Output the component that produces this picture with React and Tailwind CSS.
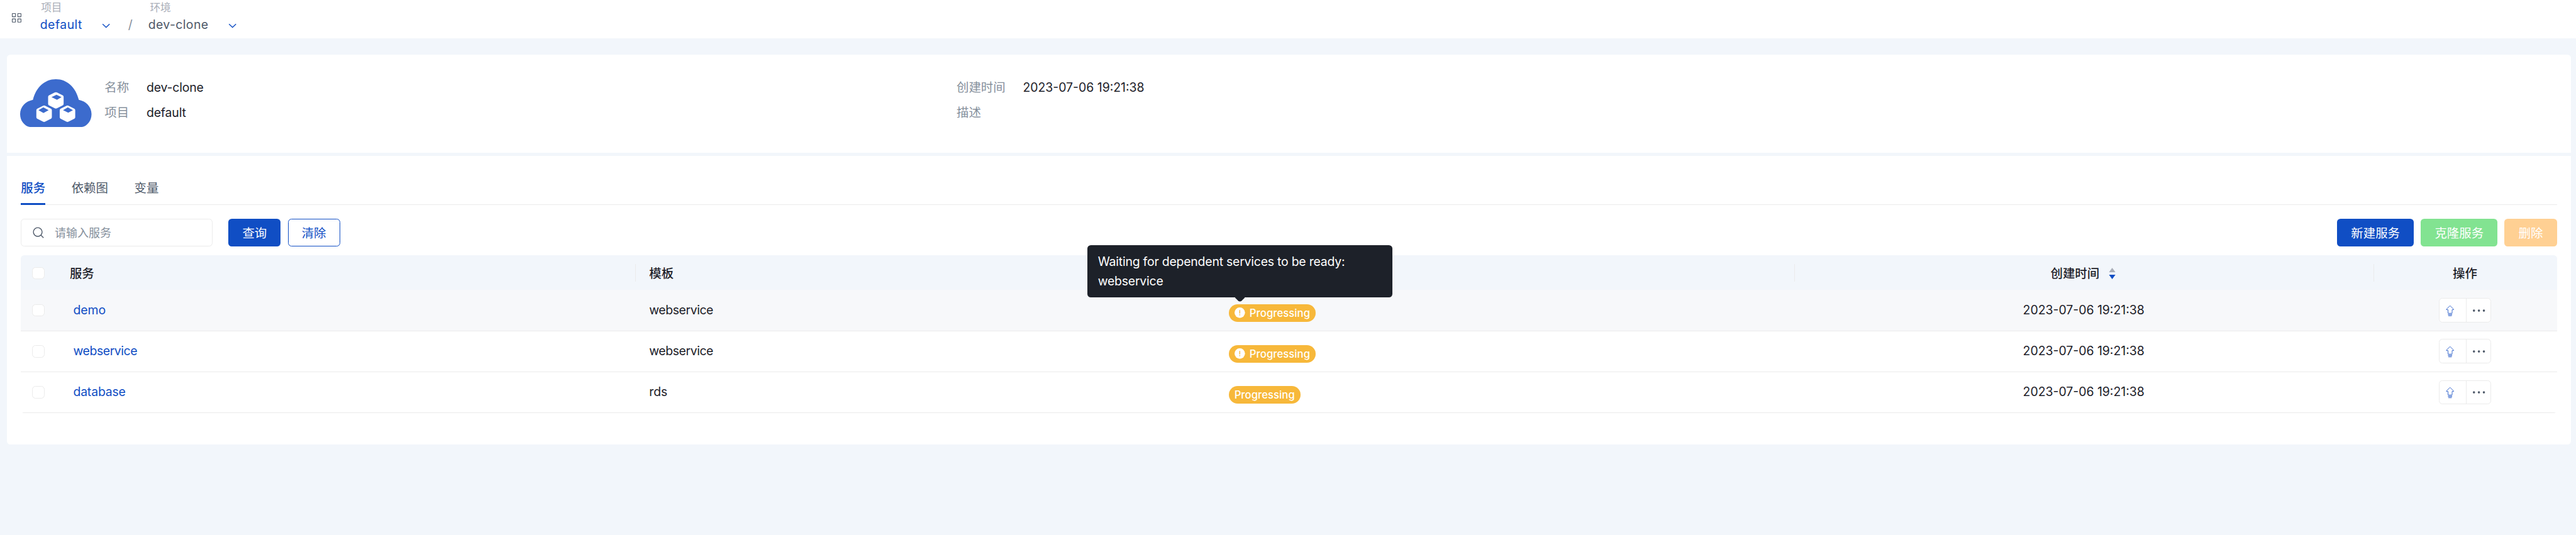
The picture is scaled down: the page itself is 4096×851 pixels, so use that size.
import React from "react";

const CheckBox = () => (
  <span className="block size-3.5 rounded-[4px] border border-[#ebebeb] bg-white" />
);

const Chevron = () => (
  <svg className="size-3.5 text-[#104ec4]" viewBox="0 0 14 14" fill="none" stroke="currentColor" strokeWidth="1">
    <path d="M3 5.200l4 3.900 4-3.900" />
  </svg>
);

const Cube = ({ x, y, children }) => (
  <g transform={`translate(${x} ${y})`}>
    <path
      d="M-8.900 -4 Q-8.900 -5.100 -8 -5.600 L-1.200 -9 Q0 -9.600 1.200 -9 L8 -5.600 Q8.900 -5.100 8.900 -4 V4.200 Q8.900 5.300 8 5.800 L1.200 9.200 Q0 9.800 -1.200 9.200 L-8 5.800 Q-8.900 5.300 -8.900 4.200 Z"
      fill="#fff"
    />
    {children}
  </g>
);

const Cloud = () => (
  <svg className="h-[55px] w-[82px] shrink-0" viewBox="0 0 82 55">
    <path
      d="M14.700 23.600 C18.200 9.500 28 0 41 0 C54 0 63.800 9.500 67.300 23.600 C75.500 25.200 81.900 31.500 81.900 40 C81.900 48.300 76 55 69 55 H13.200 C6 55 0 48.300 0 40 C0 31.500 6.400 25.200 14.700 23.600 Z"
      fill="#3c6bcd"
    />
    <Cube x={41} y={24.2}>
      <path d="M-5 -3.600 L0.700 -6.400 L6.500 -3.700 L1.300 -0.600 Z" fill="#3c6bcd" />
    </Cube>
    <Cube x={27.5} y={39.5}>
      <path d="M-6.500 -3.900 L-0.900 -7.300 L5.200 -3.900 L-0.700 -0.700 Z" fill="#3c6bcd" />
    </Cube>
    <Cube x={54.3} y={39.5}>
      <path d="M-5.100 -3.900 L0.400 -7.200 L6.300 -3.900 L0.900 -1.100 Z" fill="#3c6bcd" />
    </Cube>
  </svg>
);

const Actions = () => (
  <div className="flex h-7 w-[60px] overflow-hidden rounded-[4px] border border-[#ebebeb] bg-white">
    <div className="flex w-[31px] items-center border-r border-[#ebebeb] pl-[5.3px]">
      <svg className="size-3.5 text-[#3c6bcd]" viewBox="0 0 14 14" fill="none" stroke="currentColor" strokeWidth="0.7" strokeLinejoin="round">
        <path d="M7 1.700 L11.200 5.700 V6.200 H9.400 V10.300 H4.700 V6.200 H2.800 V5.700 Z M4.700 11.600 H9.400 M4.700 12.200 H9.400 M5.100 13.500 H8.900" />
      </svg>
    </div>
    <div className="flex flex-1 items-center justify-center">
      <svg className="size-4 text-[#4e5969]" viewBox="0 0 16 16" fill="currentColor">
        <circle cx="2.7" cy="8" r="1.3" />
        <circle cx="8.4" cy="8" r="1.3" />
        <circle cx="14.1" cy="8" r="1.3" />
      </svg>
    </div>
  </div>
);

const Badge = ({ icon, children }) => (
  <span className="mt-1.5 inline-flex h-5 items-center rounded-full bg-[#f7b83a] px-[6.5px] text-xs font-medium tracking-[0.05px] text-white">
    {icon && (
      <svg className="mb-px ml-[0.5px] mr-[5px] size-3" viewBox="0 0 12 12">
        <circle cx="6" cy="6" r="6" fill="#fff" />
        <path d="M6 3v4M6 8v1" stroke="#f7b83a" strokeWidth="1" />
      </svg>
    )}
    {children}
  </span>
);

const Field = ({ label, labelWidth, children }) => (
  <div className="flex h-[29px] items-center">
    <span className={`${labelWidth} text-[#86909c]`}>{label}</span>
    <span className="text-[#1d2129]">{children}</span>
  </div>
);

const Sep = () => <i className="absolute left-0 top-2.5 h-5 w-px bg-[#ebebeb]" />;

const rows = [
  { name: "demo", template: "webservice", icon: true, hover: true, tracking: "tracking-normal", templateTracking: "tracking-[-0.3px]" },
  { name: "webservice", template: "webservice", icon: true, tracking: "tracking-[-0.3px]", templateTracking: "tracking-[-0.3px]" },
  { name: "database", template: "rds", tracking: "tracking-[-0.12px]", templateTracking: "tracking-normal" },
];

const cols = "grid grid-cols-[40px_664.5px_664.5px_664.5px_664px_1fr]";

export default function App() {
  return (
    <div className="h-[851px] w-[4096px] overflow-hidden bg-[#f2f6fb]">
      <div
        className="w-[2954px] text-sm font-normal text-[#1d2129] [zoom:1.38659]"
        style={{ fontFamily: 'Inter, "Noto Sans CJK SC", sans-serif' }}
      >
        <header className="flex h-11 bg-white pl-[13px]">
          <svg className="mt-[14.5px] size-3" viewBox="0 0 12 12" fill="none" stroke="#4e5969" strokeWidth="0.8">
            <rect x="1.1" y="1.1" width="3.7" height="3.7" rx="0.3" />
            <rect x="7.4" y="1.1" width="3.7" height="3.7" rx="0.3" />
            <rect x="1.1" y="7.3" width="3.7" height="3.7" rx="0.3" />
            <rect x="7.4" y="7.3" width="3.7" height="3.7" rx="0.3" />
          </svg>
          <div className="ml-[21px] w-[101px]">
            <div className="pl-[1px] pt-[0.5px] text-xs text-[#a9aeb8]">项目</div>
            <div className="flex h-[25px] items-center tracking-[0.35px] text-[#104ec4]">
              <span className="w-[69px]">default</span>
              <Chevron />
            </div>
          </div>
          <div className="mt-4 flex h-[26px] w-[23px] items-center text-[#86909c]">/</div>
          <div>
            <div className="pl-[2px] pt-[0.5px] text-xs text-[#a9aeb8]">环境</div>
            <div className="flex h-[25px] items-center tracking-[0.3px] text-[#4e5969]">
              <span className="w-[90px]">dev-clone</span>
              <Chevron />
            </div>
          </div>
        </header>

        <main className="pl-2 pr-1.5 pt-[19px]">
          <section className="flex h-28 rounded-t-[4px] bg-white pl-[15px] pt-[23.5px]">
            <div className="pt-[4.5px]">
              <Cloud />
            </div>
            <div className="ml-[15px] w-[977px] tracking-[-0.1px]">
              <Field label="名称" labelWidth="w-[48px]">dev-clone</Field>
              <Field label="项目" labelWidth="w-[48px]">default</Field>
            </div>
            <div>
              <Field label="创建时间" labelWidth="w-[76px]">2023-07-06 19:21:38</Field>
              <Field label="描述" labelWidth="w-[76px]" />
            </div>
          </section>

          <section className="mt-1 h-[331px] rounded-b-[4px] bg-white px-4 pt-4">
            <nav className="flex h-10 gap-[30px] border-b border-[#ebebeb] text-[#4e5969]">
              <div className="relative flex h-10 items-center pt-0.5 font-medium text-[#104ec4]">
                服务
                <i className="absolute inset-x-0 bottom-0 h-0.5 bg-[#104ec4]" />
              </div>
              <div className="flex h-10 items-center pt-0.5">依赖图</div>
              <div className="flex h-10 items-center pt-0.5">变量</div>
            </nav>

            <div className="mt-4 flex h-8 justify-between">
              <div className="flex">
                <div className="flex w-[220px] items-center rounded-[4px] border border-[#ebebeb] pl-[13px] pt-px text-[13px] text-[#86909c]">
                  <svg className="mb-px mr-3 size-[13px]" viewBox="0 0 13 13" fill="none" stroke="#4e5969" strokeWidth="1">
                    <circle cx="5.8" cy="5.8" r="5" />
                    <path d="M9.400 9.400 L12.400 12.400" />
                  </svg>
                  请输入服务
                </div>
                <button className="ml-[18px] w-[60px] rounded-[4px] bg-[#104ec4] pt-0.5 text-white">查询</button>
                <button className="ml-2 w-[60px] rounded-[4px] border border-[#104ec4] pt-0.5 text-[#104ec4]">清除</button>
              </div>
              <div className="flex gap-2 text-white">
                <button className="w-[88px] rounded-[4px] bg-[#104ec4] pt-0.5">新建服务</button>
                <button className="w-[88px] rounded-[4px] bg-[#82e391] pt-0.5">克隆服务</button>
                <button className="w-[60px] rounded-[4px] bg-[#ffd093] pt-0.5">删除</button>
              </div>
            </div>

            <div className="relative mt-2.5">
              <div className="overflow-hidden rounded-[4px]">
                <div className={`${cols} h-10 items-center border-b border-[#f7f8fa] bg-[#f2f6fb] font-medium`}>
                  <div className="pl-[13px] pt-px"><CheckBox /></div>
                  <div className="px-4 pt-[3px]">服务</div>
                  <div className="relative flex h-10 items-center px-4 pt-[3px]"><Sep />模板</div>
                  <div className="relative h-10"><Sep /></div>
                  <div className="relative flex h-10 items-center justify-center pr-px pt-[3px]">
                    <Sep />
                    创建时间
                    <svg className="mb-[1.5px] ml-[11px] h-[13px] w-2" viewBox="0 0 8 13">
                      <path d="M4 0 L7.700 5 H0.300 Z" fill="#a9aeb8" />
                      <path d="M4 13 L7.700 8 H0.300 Z" fill="#104ec4" />
                    </svg>
                  </div>
                  <div className="relative flex h-10 items-center justify-center pt-[3px]"><Sep />操作</div>
                </div>
                {rows.map((r) => (
                  <div
                    key={r.name}
                    className={`${cols} h-[47px] items-center border-b border-[#ebebeb] ${r.hover ? "bg-[#f7f8fa]" : "bg-white"}`}
                  >
                    <div className="pl-[13px]"><CheckBox /></div>
                    <div className={`px-5 text-[#104ec4] ${r.tracking}`}>{r.name}</div>
                    <div className={`px-4 ${r.templateTracking}`}>{r.template}</div>
                    <div className="flex px-4"><Badge icon={r.icon}>Progressing</Badge></div>
                    <div className="text-center">2023-07-06 19:21:38</div>
                    <div className="flex justify-center"><Actions /></div>
                  </div>
                ))}
              </div>
              <div className="absolute left-[1223px] top-[-11.5px] h-[60px] w-[350px] rounded-[4px] bg-[#1d2129] px-3 py-2 leading-[22px] tracking-[-0.15px] text-white">
                Waiting for dependent services to be ready:<br />webservice
                <i className="absolute -bottom-1 left-[171px] size-2 rotate-45 rounded-br-[3px] bg-[#1d2129]" />
              </div>
            </div>
          </section>
        </main>
      </div>
    </div>
  );
}
